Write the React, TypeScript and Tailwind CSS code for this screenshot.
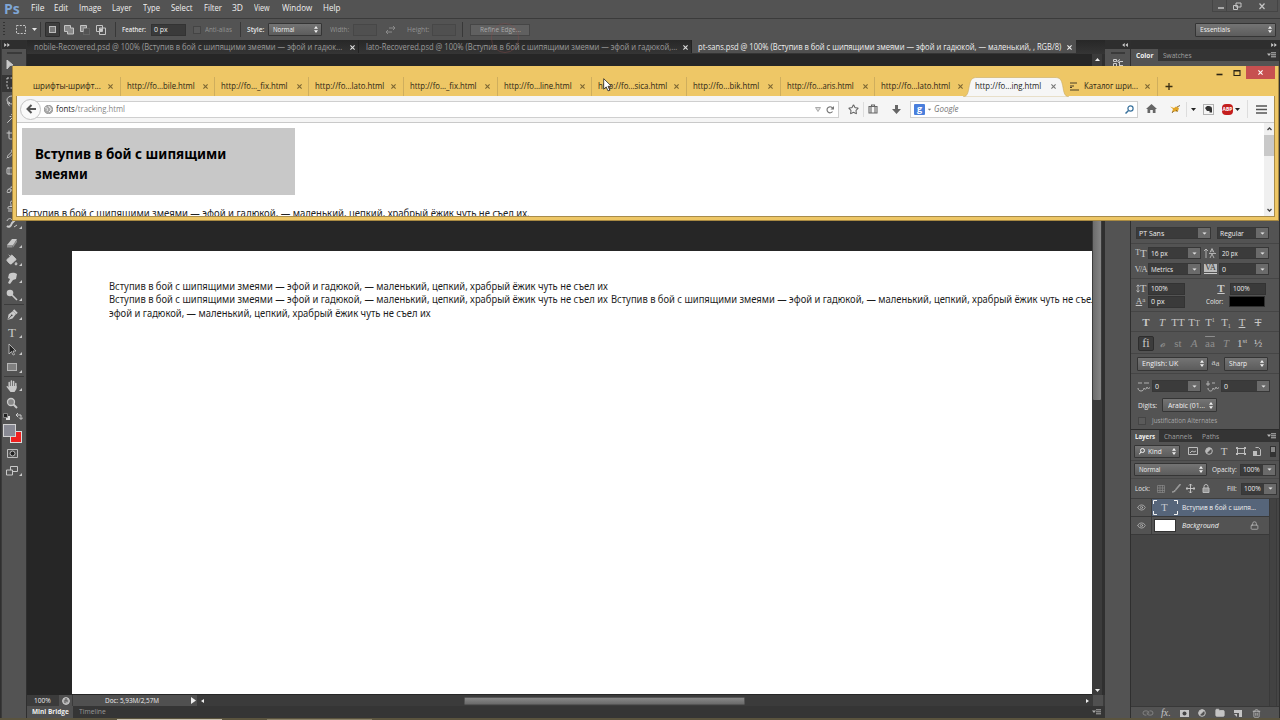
import { useLayoutEffect, useRef, useState, type ReactNode } from 'react';
import { Eraser, PaintBucket, Hand, PenTool, Lasso, Crop, Pipette, Brush, Stamp, Bandage, Star, Eye, Lock, Link, Folder, Trash2, Wand } from 'lucide-react';

function Fit({ w, className = '', children }: { w: number; className?: string; children: string }) {
  const ref = useRef<HTMLSpanElement>(null);
  const [scale, setScale] = useState(1);
  useLayoutEffect(() => {
    if (ref.current) setScale(w / ref.current.offsetWidth);
  }, [w, children]);
  return (
    <span className={`block shrink-0 overflow-visible whitespace-pre ${className}`} style={{ width: w }}>
      <span ref={ref} className="inline-block origin-left" style={{ transform: `scaleX(${scale})` }}>{children}</span>
    </span>
  );
}

function Svg({ w, h, className = '', children }: { w: number; h: number; className?: string; children: ReactNode }) {
  return (
    <svg width={w} height={h} viewBox={`0 0 ${w} ${h}`} className={`block shrink-0 ${className}`} fill="none" stroke="currentColor">
      {children}
    </svg>
  );
}

const Down = ({ className = '' }: { className?: string }) => (
  <Svg w={5} h={3} className={className}><path d="M0 0h5L2.5 3z" fill="currentColor" stroke="none" /></Svg>
);
const UpDown = ({ className = '' }: { className?: string }) => (
  <Svg w={4} h={7} className={className}><path d="M0 2.7 2 0l2 2.7zM0 4.3h4L2 7z" fill="currentColor" stroke="none" /></Svg>
);
const Cross = ({ className = '' }: { className?: string }) => (
  <Svg w={5} h={5} className={className}><path d="m.4.4 4.2 4.2M4.6.4.4 4.6" strokeWidth="1.1" /></Svg>
);
const Chevrons = ({ left = false, className = '' }: { left?: boolean; className?: string }) => (
  <Svg w={6} h={4} className={className}>
    <path d={left ? 'M2.7 0v4L.2 2zM5.9 0v4L3.4 2z' : 'M.2 0v4l2.5-2zM3.3 0v4l2.5-2z'} fill="currentColor" stroke="none" />
  </Svg>
);
const PanelMenu = ({ className = '' }: { className?: string }) => (
  <Svg w={9} h={6} className={className}><path d="M0 1.5h4L2 4z" fill="currentColor" stroke="none" /><path d="M4 .8h5M4 2.8h5M4 4.8h5" /></Svg>
);

const Divider = ({ className = '' }: { className?: string }) => (
  <div className={`h-[15px] w-px shrink-0 bg-[#383838] ${className}`} />
);

const selectCls = 'flex shrink-0 items-center rounded-[1px] border border-[#353535] bg-linear-to-b from-[#747474] to-[#5c5c5c] text-[#f0f0f0]';
const fieldCls = 'flex shrink-0 items-center border border-[#333] bg-[#3a3a3a] text-[#ededed]';

const menus: [string, number, number][] = [
  ['File', 31, 13], ['Edit', 54, 14], ['Image', 79, 22], ['Layer', 112, 20], ['Type', 142.5, 17], ['Select', 171, 21],
  ['Filter', 204, 18], ['3D', 232, 11], ['View', 254, 16], ['Window', 282, 30], ['Help', 323, 17],
];

function MenuBar() {
  return (
    <div className="flex h-[18px] items-start justify-between bg-[#535353]">
      <div className="flex h-[17px] items-center pl-[4px]">
        <Fit w={16} className="mr-[11px] text-[14px] font-bold text-[#7fa6d6]">Ps</Fit>
        {menus.map(([name, x, w], i) => (
          <div key={name} style={{ width: (i < menus.length - 1 ? menus[i + 1][1] : 345) - x }}>
            <Fit w={w} className="text-[8.5px] text-[#f0f0f0]">{name}</Fit>
          </div>
        ))}
      </div>
      <div className="mr-[2px] flex h-[12px] items-center border border-t-0 border-[#454545] text-[#c4c4c4]">
        <Svg w={13} h={10}><path d="M5 7h6" strokeWidth="1.5" /></Svg>
        <div className="h-full w-px bg-[#454545]" />
        <Svg w={20} h={10}><path d="M9 2h5v4h-5zM6.500 4.500h4v4h-4z" /></Svg>
        <Svg w={30} h={10}><path d="m12.500 2.500 5 5.500M17.500 2.500l-5 5.500" strokeWidth="1.2" /></Svg>
      </div>
    </div>
  );
}

function OptionsBar() {
  return (
    <div className="flex h-[22px] items-center justify-between border-t border-[#3b3b3b] bg-[#535353] text-[7px] text-[#e6e6e6]">
      <div className="flex items-center pl-[3px]">
        <Svg w={3} h={15}><path d="M1 0v15" stroke="#333" strokeWidth="2" strokeDasharray="1 2" /></Svg>
        <Svg w={10} h={9} className="ml-[10px] text-[#c5c5c5]"><path d="M.5.5h9v8h-9z" strokeDasharray="2 1.3" /></Svg>
        <Down className="ml-[6px]" />
        <Divider className="ml-[3px]" />
        <div className="ml-[4px] flex h-[15px] w-[15px] items-center justify-center rounded-[1px] border border-[#2e2e2e] bg-[#3d3d3d]">
          <div className="h-[7px] w-[7px] border border-[#bbb] bg-[#777]" />
        </div>
        <Svg w={10} h={10} className="ml-[4px] text-[#c5c5c5]"><path d="M.5.500h6v2.500h3v6h-6v-2.500h-3z" fill="#888" /></Svg>
        <Svg w={10} h={10} className="ml-[6px] text-[#c5c5c5]"><path d="M.5.500h6v2.500h-3v3.500h-3z" fill="#888" /><path d="M3.500 3.500h6v6h-6z" stroke="#777" strokeDasharray="1 1" /></Svg>
        <Svg w={10} h={10} className="ml-[6px] text-[#c5c5c5]"><path d="M.5.500h6v6h-6zM3.500 3h6v6.500h-6z" /><path d="M4 4h2v2h-2z" fill="#ddd" /></Svg>
        <Divider className="ml-[9px]" />
        <Fit w={24} className="ml-[6px] font-semibold">Feather:</Fit>
        <div className={`${fieldCls} ml-[5px] h-[12px] w-[35px] pl-[2px]`}><Fit w={14}>0 px</Fit></div>
        <div className="ml-[7px] h-[8px] w-[8px] border border-[#444] bg-[#595959]" />
        <Fit w={27} className="ml-[4px] text-[#929292]">Anti-alias</Fit>
        <Divider className="ml-[8px]" />
        <Fit w={17} className="ml-[6px] font-semibold">Style:</Fit>
        <div className={`${selectCls} ml-[4px] h-[13px] w-[54px] justify-between pr-[3px] pl-[4px]`}><Fit w={21}>Normal</Fit><UpDown /></div>
        <Fit w={19} className="ml-[8px] text-[#929292]">Width:</Fit>
        <div className="ml-[4px] h-[12px] w-[24px] border border-[#474747] bg-[#505050]" />
        <Svg w={9} h={8} className="ml-[9px] text-[#8b8b8b]"><path d="M3 2h6M7 0l2 2-2 2M6 6H0M2 4 0 6l2 2" /></Svg>
        <Fit w={22} className="ml-[12px] text-[#929292]">Height:</Fit>
        <div className="ml-[3px] h-[12px] w-[24px] border border-[#474747] bg-[#505050]" />
        <Divider className="ml-[6px]" />
        <div className="ml-[7px] flex h-[12px] w-[60px] items-center justify-center border border-[#464646] bg-[#606060] text-[#a9a9a9]"><Fit w={41}>Refine Edge...</Fit></div>
      </div>
      <div className={`${selectCls} mr-[4px] h-[14px] w-[81px] justify-between pr-[3px] pl-[4px] text-[7px]`}><Fit w={30}>Essentials</Fit><UpDown /></div>
    </div>
  );
}

function Tool({ children, on = false, corner = true }: { children: ReactNode; on?: boolean; corner?: boolean }) {
  return (
    <div className={`flex h-[17.5px] items-center justify-center pr-px text-[#c9c9c9] ${on ? 'bg-[#363636]' : ''}`}>
      <div className="flex w-[14px] justify-center">{children}</div>
      <Svg w={3} h={17}>{corner && <path d="M3 11v3H0z" fill="currentColor" stroke="none" />}</Svg>
    </div>
  );
}

function Toolbar() {
  return (
    <div className="flex w-[25px] shrink-0 flex-col border-l border-[#3a3a3a] bg-[#535353]">
      <div className="flex h-[9px] items-center bg-[#2e2e2e] pl-[2px] text-[#ccc]"><Chevrons /></div>
      <div className="flex h-[8px] items-center justify-center"><div className="h-[2px] w-[15px] bg-[#3a3a3a]" /></div>
      <Tool><Svg w={12} h={12}><path d="m1 0 6 5-3 .5L1 9z" fill="currentColor" /></Svg></Tool>
      <Tool on><Svg w={12} h={12}><path d="M1 1h10v10H1z" strokeDasharray="2 1.500" /></Svg></Tool>
      <Tool><Lasso size={12} /></Tool>
      <Tool><Wand size={12} /></Tool>
      <Tool><Crop size={12} /></Tool>
      <Tool><Pipette size={12} /></Tool>
      <Tool><Bandage size={12} /></Tool>
      <Tool><Brush size={12} /></Tool>
      <Tool><Stamp size={12} /></Tool>
      <Tool><Svg w={12} h={12}><path d="M1 9c2 2 4 0 5-3l5-5" strokeWidth="2" /><path d="M1 4c1-3 4-3 5-1M8 10l3-2" /></Svg></Tool>
      <div className="h-[2px]" />
      <Tool><Svg w={12} h={10}><path d="m1 7 5-6h5L7 7.500z" fill="#c9c9c9" stroke="none" /><path d="M1 7h5.500v2.500H1zM7 9.500 11 4V1.500L7 7z" fill="#8f8f8f" stroke="none" /></Svg></Tool>
      <Tool><PaintBucket size={12} fill="#c9c9c9" strokeWidth={1.5} /></Tool>
      <Tool><Svg w={12} h={12}><path d="M3 2c3-2 6-1 8 0l-1 5-3 1-3 4-2-1 2-4-2-1z" fill="currentColor" stroke="none" /></Svg></Tool>
      <Tool><Svg w={12} h={12}><circle cx="4" cy="4" r="3.300" fill="currentColor" stroke="none" /><path d="m6 6 5 5" strokeWidth="1.600" /></Svg></Tool>
      <div className="mx-[2px] mb-[1px] h-px shrink-0 bg-[#3c3c3c]" />
      <Tool><Svg w={12} h={13}><path d="m1.500 12 1-5.500L7 3l3 3-3.500 4.500z" fill="#c9c9c9" stroke="none" /><path d="m7.500 2 3.500 3.500" strokeWidth="2" /><path d="m2 11.500 3-3.500" stroke="#444" strokeWidth=".8" /><circle cx="5.700" cy="7.300" r=".9" fill="#444" stroke="none" /></Svg></Tool>
      <Tool><span className="font-['Liberation_Serif',serif] text-[13px] leading-none">T</span></Tool>
      <Tool><Svg w={10} h={13}><path d="m2 1 7 7H6l1.500 3.500-1.500.500L4.500 8.500 2 11z" fill="#252525" strokeWidth=".8" /></Svg></Tool>
      <Tool><div className="h-[8px] w-[10px] border border-[#b5b5b5] bg-[#808080]" /></Tool>
      <div className="mx-[2px] h-px shrink-0 bg-[#3c3c3c]" />
      <Tool><Svg w={12} h={12}><path d="M3.200 8V2.500M5.400 7V1M7.600 7V1.500M9.800 7.500V3.500" strokeWidth="1.500" strokeLinecap="round" /><path d="M.3 6.500 1.500 6 3 7.500V6h7.500v3L8.500 12H4.500z" fill="currentColor" stroke="none" /></Svg></Tool>
      <Tool corner={false}><Svg w={12} h={12}><circle cx="5" cy="5" r="3.500" fill="#888" strokeWidth="1.300" /><path d="m7.500 7.500 3.500 3.500" strokeWidth="2" /></Svg></Tool>
      <div className="flex h-[9px] items-center gap-[6px] pl-[1px] text-[#ccc]">
        <Svg w={7} h={7}><path d="M3 3h4v4H3z" fill="#ddd" stroke="none" /><path d="M.5.500h4v4h-4z" fill="#222" stroke="#888" /></Svg>
        <Svg w={7} h={7}><path d="M0 2h5v4M2 0 0 2l2 2M3 4.500l2 2 2-2" /></Svg>
      </div>
      <div className="grid h-[23px] grid-cols-[7px_6px_6px] grid-rows-[7px_6px_6px] pt-[3px] pl-[1px]">
        <div className="z-10 col-start-1 col-end-3 row-start-1 row-end-3 border border-[#d2d2d2] bg-[#888993]" />
        <div className="col-start-2 col-end-4 row-start-2 row-end-4 border border-[#ddd] bg-[#f0201f]" />
      </div>
      <div className="flex h-[18px] items-center justify-center pt-[1px] pr-[4px]"><Svg w={11} h={9} className="text-[#bdbdbd]"><path d="M.5.500h10v8H.5z" /><circle cx="5.500" cy="4.500" r="2.500" fill="#222" /></Svg></div>
      <Tool><Svg w={12} h={10}><path d="M4.500.500h7v5h-7z" /><path d="M.5 4h6v5h-6z" fill="#555" /></Svg></Tool>
    </div>
  );
}

const phrase = 'Вступив в бой с шипящими змеями — эфой и гадюкой, — маленький, цепкий, храбрый ёжик чуть не съел их';

function Document() {
  return (
    <div className="ml-[1px] flex w-[1078px] shrink-0 flex-col bg-[#2e2e2e]">
      <div className="flex h-[14px] shrink-0 items-center bg-linear-to-b from-[#272727] to-[#353535] pb-px text-[8.2px] text-[#9a9a9a]">
        <div className="flex h-full w-[332px] items-center border-r border-[#222] pt-[2px] pl-[7px]"><Fit w={308}>nobile-Recovered.psd @ 100% (Вступив в бой с шипящими змеями — эфой и гадюк...</Fit><Cross className="ml-[8px] text-[#ddd]" /></div>
        <div className="flex h-full w-[333px] items-center border-r border-[#222] pt-[2px] pl-[7px]"><Fit w={311}>lato-Recovered.psd @ 100% (Вступив в бой с шипящими змеями — эфой и гадюкой,...</Fit><Cross className="ml-[6px] text-[#ddd]" /></div>
        <div className="flex h-full w-[384px] items-center bg-[#505050] pt-[2px] pl-[6px] text-[#efefef]"><Fit w={363}>pt-sans.psd @ 100% (Вступив в бой с шипящими змеями — эфой и гадюкой, — маленький, , RGB/8)</Fit><Cross className="ml-[6px]" /></div>
      </div>
      <div className="flex h-[641px] shrink-0">
        <div className="h-full w-[1065px] overflow-hidden bg-[#262626] pt-[197px] pl-[45px]">
          <div className="h-[443px] overflow-hidden bg-white pt-[29px] pl-[37px] font-['Noto_Sans',sans-serif] text-[10.5px] leading-[13.3px] text-[#1c1c1c]">
            <Fit w={499}>{phrase}</Fit>
            <div className="flex gap-[3px]"><Fit w={499}>{phrase}</Fit><Fit w={499}>{phrase}</Fit></div>
            <Fit w={322}>эфой и гадюкой, — маленький, цепкий, храбрый ёжик чуть не съел их</Fit>
          </div>
        </div>
        <div className="flex w-[10px] flex-col items-center justify-between bg-[#3b3b3b] pt-[4px] pb-[3px]">
          <Down className="rotate-180 text-[#eee]" />
          <div className="mb-[285px] h-[334px] w-[8px] rounded-b-[1px] bg-linear-to-r from-[#6c6c6c] to-[#858585]" />
          <Down className="text-[#eee]" />
        </div>
        <div className="w-[3px] bg-[#2f2f2f]" />
      </div>
      <div className="flex h-[11px] shrink-0 items-center bg-[#3b3b3b] text-[7px] text-[#eee]">
        <Fit w={17} className="ml-[7px]">100%</Fit>
        <div className="ml-[8px] flex h-full w-[13px] items-center justify-center bg-[#505050]"><Svg w={8} h={8} className="text-[#ccc]"><circle cx="4" cy="4" r="3.400" fill="#aaa" /><path d="M4 1v3h2M3 3v3" stroke="#555" /></Svg></div>
        <div className="ml-px flex h-full w-[124px] items-center justify-between bg-[#505050] pl-[32px]"><Fit w={54}>Doc: 5,93M/2,57M</Fit><Svg w={5} h={7} className="mr-[1px]"><path d="M0 0v7l5-3.500z" fill="currentColor" stroke="none" /></Svg></div>
        <Svg w={3} h={4} className="ml-[4px]"><path d="M3 0v4L0 2z" fill="currentColor" stroke="none" /></Svg>
        <div className="ml-[260px] h-[8px] w-[281px] rounded-[1px] border border-[#555] bg-linear-to-b from-[#888] to-[#6a6a6a]" />
        <Svg w={3} h={4} className="ml-[341px]"><path d="M0 0v4l3-2z" fill="currentColor" stroke="none" /></Svg>
        <div className="ml-[4px] h-full w-[10px] bg-[#505050]" />
      </div>
      <div className="flex h-[12px] shrink-0 items-center justify-between bg-[#353535] text-[7.500px] font-bold">
        <div className="flex h-full items-center">
          <div className="flex h-full w-[46px] items-center bg-[#505050] pl-[5px] text-[#eee]"><Fit w={37}>Mini Bridge</Fit></div>
          <Fit w={27} className="ml-[6px] font-normal text-[#999]">Timeline</Fit>
        </div>
        <PanelMenu className="mr-[4px] text-[#aaa]" />
      </div>
    </div>
  );
}

const DropButton = () => (
  <div className="flex h-full w-[12px] shrink-0 items-center justify-center bg-[#6a6a6a] text-[#ddd]"><Down className="scale-90" /></div>
);

function Combo({ w, text, tw, className = '' }: { w: number; text: string; tw: number; className?: string }) {
  return (
    <div className={`flex h-[12px] shrink-0 items-center justify-between border border-[#373737] bg-[#3b3b3b] pl-[2px] text-[#ededed] ${className}`} style={{ width: w }}>
      <Fit w={tw}>{text}</Fit>
      <DropButton />
    </div>
  );
}

function Glyph({ className = '', children }: { className?: string; children: ReactNode }) {
  return <span className={`flex w-[16px] shrink-0 items-center justify-center font-['Liberation_Serif',serif] text-[11px] leading-none text-[#c8c8c8] ${className}`}>{children}</span>;
}

function CharacterPanel() {
  return (
    <div className="flex h-[368px] shrink-0 flex-col justify-end bg-[#535353] text-[7px] text-[#e8e8e8]">
      <div className="flex h-[21px] items-center gap-[6px] border-b border-[#454545] pl-[5px]">
        <Combo w={75} text="PT Sans" tw={25} /><Combo w={52} text="Regular" tw={24} />
      </div>
      <div className="flex h-[35px] flex-col justify-center gap-[4px] border-b border-[#454545]">
        <div className="flex h-[12px] items-center">
          <Glyph className="w-[17px]! pl-[3px]"><span className="text-[8px]">T</span>T</Glyph><Combo w={53} text="16 px" tw={17} />
          <Svg w={12} h={11} className="ml-[3px] text-[#c8c8c8]"><path d="M2 1v9M0 3l2-2 2 2M6 4.500 8 .500l2 4M7 3h2M5 5.500h7M6 10l2-4 2 4" strokeWidth=".8" /></Svg>
          <Combo w={50} text="20 px" tw={16} className="ml-[3px]" />
        </div>
        <div className="flex h-[12px] items-center">
          <Glyph className="w-[17px]! pl-[2px] text-[9px]! tracking-[-1.2px]">V/A</Glyph><Combo w={53} text="Metrics" tw={22} />
          <div className="ml-[3px] flex h-[11px] w-[13px] flex-col items-center"><span className="w-full bg-[#bbb] text-center font-['Liberation_Serif',serif] text-[8px] leading-[8px] text-[#333]">VA</span><div className="mt-px h-px w-full bg-[#ccc]" /></div>
          <Combo w={50} text="0" tw={4} className="ml-[2px]" />
        </div>
      </div>
      <div className="flex h-[33px] flex-col justify-center border-b border-[#454545]">
        <div className="flex h-[13px] items-center">
          <Glyph className="w-[17px]! pl-[3px]"><Svg w={4} h={9}><path d="M2 1v7M.5 2.500 2 .800l1.500 1.700M.5 6.500 2 8.200l1.500-1.700" strokeWidth=".8" /></Svg>T</Glyph><div className={`${fieldCls} h-[12px] w-[37px] pl-[2px]`}><Fit w={17}>100%</Fit></div>
          <Glyph className="ml-[28px] font-bold underline">T</Glyph><div className={`${fieldCls} ml-[1px] h-[12px] w-[36px] pl-[2px]`}><Fit w={17}>100%</Fit></div>
        </div>
        <div className="flex h-[13px] items-center">
          <Glyph className="w-[17px]! pl-[2px] text-[9px]!"><span className="underline">A</span><span className="mb-[3px] text-[7px]">a</span></Glyph><div className={`${fieldCls} h-[12px] w-[37px] pl-[2px]`}><Fit w={14}>0 px</Fit></div>
          <Fit w={17} className="ml-[21px]">Color:</Fit><div className="ml-[6px] h-[11px] w-[36px] border border-[#2f2f2f] bg-black" />
        </div>
      </div>
      <div className="flex h-[20px] items-center border-b border-[#454545] pt-[2px] pl-[7px]">
        <Glyph className="font-bold">T</Glyph><Glyph className="italic">T</Glyph><Glyph>TT</Glyph><Glyph>T<span className="mt-[2px] text-[8px]">T</span></Glyph>
        <Glyph>T<span className="mb-[5px] text-[6px]">1</span></Glyph><Glyph>T<span className="mt-[6px] text-[6px]">1</span></Glyph><Glyph className="underline">T</Glyph><Glyph className="line-through">T</Glyph>
      </div>
      <div className="flex h-[22px] items-center border-b border-[#454545] pt-[1px] pl-[7px]">
        <Glyph className="h-[15px] rounded-[2px] border border-[#2d2d2d] bg-[#3c3c3c] text-[12px]!">fi</Glyph><Glyph className="italic opacity-50">&#x1D4F8;</Glyph><Glyph className="opacity-50">st</Glyph><Glyph className="italic opacity-50">A</Glyph><Glyph className="overline opacity-50">aa</Glyph><Glyph className="italic opacity-50">T</Glyph><Glyph>1<span className="mb-[4px] text-[7px]">st</span></Glyph><Glyph>½</Glyph>
      </div>
      <div className="flex h-[20px] items-center border-b border-[#454545] pl-[6px]">
        <div className={`${selectCls} h-[14px] w-[71px] justify-between pr-[3px] pl-[4px]`}><Fit w={36}>English: UK</Fit><UpDown /></div>
        <Glyph className="mr-px w-[15px]! text-[9px]!"><span className="mb-[3px]">a</span><span>a</span></Glyph>
        <div className={`${selectCls} h-[14px] w-[44px] justify-between pr-[3px] pl-[4px]`}><Fit w={18}>Sharp</Fit><UpDown /></div>
      </div>
      <div className="flex h-[24px] items-center pl-[6px]">
        <Svg w={13} h={11} className="text-[#bbb]"><path d="M1 2h4M7 2h5M1 7c0 4 6 4 6 0M7 7c1 2 3 1 3-1 0 2 3 2 3 0" strokeWidth=".9" /></Svg>
        <Combo w={49} text="0" tw={4} className="ml-[2px]" />
        <Svg w={13} h={11} className="ml-[5px] text-[#bbb]"><path d="M2 0v5M0 3h4M6 2h3M2 7c0 4 5 4 5 0M7 7c1 2 3 1 3-1 0 2 3 2 3 0" strokeWidth=".9" /></Svg>
        <Combo w={49} text="0" tw={4} className="ml-[2px]" />
      </div>
      <div className="flex h-[14px] items-center pl-[7px]">
        <Fit w={19}>Digits:</Fit>
        <div className={`${selectCls} ml-[5px] h-[14px] w-[55px] justify-between pr-[3px] pl-[5px]`}><Fit w={37}>Arabic (01...</Fit><UpDown /></div>
      </div>
      <div className="flex h-[17px] items-center pl-[7px]">
        <div className="h-[8px] w-[8px] border border-[#454545] bg-[#5a5a5a]" />
        <Fit w={65} className="ml-[6px] text-[#a8a8a8]">Justification Alternates</Fit>
      </div>
    </div>
  );
}

function LayersPanel() {
  return (
    <>
      <div className="flex h-[13px] shrink-0 items-center border-t border-[#2b2b2b] bg-[#343434] text-[7px] text-[#a0a0a0]">
        <div className="flex h-full w-[28px] items-center bg-[#535353] pl-[4px] font-bold text-[#f0f0f0]"><Fit w={20}>Layers</Fit></div>
        <Fit w={28} className="ml-[5px]">Channels</Fit><Fit w={17} className="ml-[10px]">Paths</Fit><PanelMenu className="ml-[48px] text-[#bbb]" />
      </div>
      <div className="shrink-0 bg-[#535353] text-[7px] text-[#e8e8e8]">
        <div className="flex h-[19px] items-center border-b border-[#454545] pl-[3px] text-[#bdbdbd]">
          <div className={`${selectCls} h-[13px] w-[46px] justify-between pr-[3px] pl-[4px]`}><Svg w={6} h={7}><circle cx="3.500" cy="2.500" r="2" /><path d="M2 4 0 6.500" /></Svg><Fit w={14} className="mr-[7px]">Kind</Fit><UpDown /></div>
          <Svg w={10} h={8} className="ml-[8px]"><path d="M.5.500h9v7h-9zM2 6l2-2 2 1 2-1" /></Svg>
          <Svg w={8} h={8} className="ml-[7px]"><circle cx="4" cy="4" r="3.300" /><path d="M1.500 6 6 1.500A3.300 3.300 0 0 0 1.500 6" fill="currentColor" /></Svg>
          <Glyph className="ml-[3px]">T</Glyph>
          <Svg w={10} h={8} className="ml-[4px]"><path d="M1.500 1.500h7v5h-7z" /><path d="M0 0h2v2H0zM8 0h2v2H8zM0 6h2v2H0zM8 6h2v2H8z" fill="currentColor" stroke="none" /></Svg>
          <Svg w={8} h={9} className="ml-[7px]"><path d="M2.500.500h3l2 2v6H3" /><path d="M0 4h4v5H0z" fill="currentColor" stroke="none" /></Svg>
          <div className="ml-[9px] h-[11px] w-[6px] border border-[#333] bg-[#333]"><div className="h-[5px] bg-[#888]" /></div>
        </div>
        <div className="flex h-[18px] items-center border-b border-[#484848] pl-[3px]">
          <div className={`${selectCls} h-[13px] w-[73px] justify-between pr-[3px] pl-[4px]`}><Fit w={21}>Normal</Fit><UpDown /></div>
          <Fit w={25} className="ml-[5px]">Opacity:</Fit><Combo w={36} text="100%" tw={17} className="ml-[3px]" />
        </div>
        <div className="flex h-[20px] items-center border-b border-[#3e3e3e] pl-[4px]">
          <Fit w={15}>Lock:</Fit>
          <Svg w={8} h={8} className="ml-[7px] text-[#888]"><path d="M.5.500h7v7h-7zM3 0v8M5.500 0v8M0 3h8M0 5.500h8" strokeWidth=".7" /></Svg>
          <Svg w={10} h={9} className="ml-[6px] text-[#999]"><path d="M9.500 0 4.500 6M1 8c2 0 3-1 3-2" strokeWidth="1.600" /></Svg>
          <Svg w={9} h={9} className="ml-[5px] text-[#ccc]"><path d="M4.500 0v9M0 4.500h9M3 1.500 4.500 0 6 1.500M3 7.500 4.500 9 6 7.500M1.500 3 0 4.500 1.500 6M7.500 3 9 4.500 7.500 6" strokeWidth=".9" /></Svg>
          <Svg w={8} h={9} className="ml-[7px] text-[#bbb]"><path d="M2 4V2.500a2 2 0 0 1 4 0V4" /><path d="M1 4h6v4.500H1z" fill="#999" /></Svg>
          <Fit w={10} className="ml-[17px]">Fill:</Fit><Combo w={36} text="100%" tw={17} className="ml-[4px]" />
        </div>
      </div>
      <div className="flex h-[207px] shrink-0 bg-[#454545] text-[7.500px] text-[#f0f0f0]">
        <div className="flex w-[138px] flex-col">
          <div className="flex h-[18px] items-center border-b border-[#393939] bg-[#535353]">
            <Eye size={9} className="ml-[6px] text-[#b8b8b8]" />
            <div className="ml-[5px] flex h-full w-[118px] items-center border-l border-[#3d3d3d] bg-[#56657a]">
              <Svg w={25} h={15} className="ml-px"><path d="M4 .500H.5V4M21 .500h3.500V4M4 14.500H.5V11M21 14.500h3.500V11" /></Svg>
              <span className="-ml-[17px] w-[9px] font-['Liberation_Serif',serif] text-[11px] leading-none text-[#c5c9d0]">T</span>
              <Fit w={74} className="ml-[12px]">Вступив в бой с шипя...</Fit>
            </div>
          </div>
          <div className="flex h-[18px] items-center border-b border-[#393939] bg-[#535353]">
            <Eye size={9} className="ml-[6px] text-[#b8b8b8]" />
            <div className="ml-[5px] flex h-full items-center border-l border-[#3d3d3d]">
              <div className="ml-[2px] h-[13px] w-[22px] border border-[#333] bg-white" />
              <Fit w={37} className="ml-[6px] italic">Background</Fit>
              <Lock size={9} className="ml-[31px] text-[#bbb]" />
            </div>
          </div>
        </div>
        <div className="w-[8px] border-x border-[#3a3a3a] bg-[#424242]" />
      </div>
      <div className="flex h-[13px] shrink-0 items-center border-t border-[#383838] bg-[#535353] pl-[12px] text-[#c4c4c4]">
        <Link size={10} className="rotate-45 text-[#888]" />
        <span className="ml-[8px] w-[11px] font-['Liberation_Serif',serif] text-[10px] leading-none italic">fx.</span>
        <Svg w={9} h={7} className="ml-[8px]"><path d="M0 0h9v7H0z" fill="currentColor" stroke="none" /><circle cx="4.500" cy="3.500" r="2" fill="#444" stroke="none" /></Svg>
        <Svg w={9} h={8} className="ml-[9px]"><circle cx="4" cy="4" r="3.300" /><path d="M1.500 6 6 1.500A3.300 3.300 0 0 0 1.500 6" fill="currentColor" /></Svg>
        <Folder size={10} fill="currentColor" className="ml-[8px]" />
        <Svg w={8} h={7} className="ml-[9px]"><path d="M0 0h8v7H5V3H0z" fill="currentColor" stroke="none" /><path d="M0 4h3v3z" fill="currentColor" stroke="none" /></Svg>
        <Trash2 size={9} className="ml-[10px]" />
      </div>
    </>
  );
}

function RightDock() {
  return (
    <>
      <div className="flex w-[25px] shrink-0 flex-col bg-[#535353]">
        <div className="flex h-[9px] shrink-0 items-center justify-end bg-[#2e2e2e] pr-[2px] text-[#ccc]"><Chevrons left /></div>
        <div className="mx-auto mt-[3px] h-[2px] w-[14px] bg-[#3a3a3a]" />
        <Svg w={12} h={11} className="mx-auto mt-[4px] text-[#ccc]"><path d="M1.500 1.500h3v2h-3zM1.500 5.500h3v3h-3zM7.500 8V3.500H11M7 5l-1.500-2L8 1.500M7 7.500h4" /></Svg>
      </div>
      <div className="ml-[1px] flex w-[148px] shrink-0 flex-col">
        <div className="flex h-[9px] shrink-0 items-center justify-end bg-[#2e2e2e] pr-[2px] text-[#ccc]"><Chevrons /></div>
        <div className="flex h-[12px] shrink-0 items-center bg-[#343434] text-[7px] text-[#a0a0a0]">
          <div className="flex h-full w-[27px] items-center bg-[#535353] pl-[5px] font-bold text-[#f0f0f0]"><Fit w={17}>Color</Fit></div>
          <Fit w={29} className="ml-[5px]">Swatches</Fit><PanelMenu className="ml-[75px] text-[#bbb]" />
        </div>
        <CharacterPanel />
        <LayersPanel />
      </div>
    </>
  );
}

const browserTabs: [string, number][] = [
  ['шрифты-шрифт...', 68], ['http://fo...bile.html', 68], ['http://fo..._fix.html', 67], ['http://fo...lato.html', 69], ['http://fo..._fix.html', 67],
  ['http://fo...line.html', 68], ['http://fo...sica.html', 69], ['http://fo...bik.html', 66], ['http://fo...aris.html', 67], ['http://fo...lato.html', 69],
];

function BrowserTabs() {
  return (
    <div className="flex h-[30px] justify-between">
      <div className="flex items-end pl-[13.500px] text-[8.300px] text-[#2b2414]">
        {browserTabs.map(([name, w], i) => (
          <div key={i} className={`flex h-[19px] w-[94.3px] items-center justify-between pr-[6.500px] pl-[6px] ${i < 9 ? 'border-r border-[#cfae5d]' : ''}`}>
            <Fit w={w}>{name}</Fit><Cross className="text-[#7b6633]" />
          </div>
        ))}
        <div className="relative flex h-[19px] w-[94px] items-center justify-between pr-[7px] pl-[6px] text-[#222]">
          <Svg w={106} h={20} className="absolute top-0 -left-[6px]"><path d="M0 20C6 19 5 13 7 6 8 2 10 .500 14 .500h78c4 0 6 1.500 7 5.500 2 7 1 13 7 14z" fill="#f6f6f6" stroke="#c9ab61" strokeWidth=".6" /></Svg>
          <Fit w={66} className="relative">http://fo...ing.html</Fit><Cross className="relative text-[#777]" />
        </div>
        <div className="flex h-[19px] w-[95px] items-center border-r border-[#cfae5d] pl-[7px]">
          <Svg w={9} h={9}><path d="M0 1h7M0 4h4M0 8h9M0 5.500h2" stroke="#4b4027" strokeWidth="1.200" /></Svg>
          <Fit w={54} className="ml-[5px]">Каталог шри...</Fit><Cross className="ml-[7px] text-[#7b6633]" />
        </div>
        <Svg w={8} h={19} className="ml-[7px]"><path d="M4 6v7M.5 9.500h7" stroke="#3a2f13" strokeWidth="1.300" /></Svg>
      </div>
      <div className="absolute top-0 right-[3px] flex h-[13px] text-[#2b2414]">
        <Svg w={17} h={13}><path d="M5.500 8.500h6" strokeWidth="1.600" /></Svg>
        <Svg w={18} h={13}><path d="M6 4.500h6v5h-6zM6 5h6" strokeWidth="1.100" /></Svg>
        <div className="flex w-[29px] items-center justify-center bg-[#c75050] text-white"><Cross /></div>
      </div>
    </div>
  );
}

function NavBar() {
  return (
    <div className="flex h-[27px] shrink-0 items-center border-b border-[#c9c9c9] bg-[#f5f5f5] text-[8.300px] text-[#777]">
      <div className="z-10 ml-[3px] flex h-[21px] w-[21px] items-center justify-center rounded-full border border-[#c4c4c4] bg-[#fafafa]">
        <Svg w={10} h={10} className="text-[#555]"><path d="M10 5H2M5.500 1 1.500 5l4 4" strokeWidth="2" /></Svg>
      </div>
      <div className="-ml-[7px] flex h-[17px] w-[805px] items-center border border-[#cfcfcf] bg-white pl-[9px]">
        <Svg w={9} h={9} className="text-[#999]"><circle cx="4.500" cy="4.500" r="4.100" fill="#aaa" /><path d="M1 3c2-1 3 1 2 3M5 1c-1 2 3 1 2 4l-2 2" stroke="#f4f4f4" /></Svg>
        <Fit w={19} className="ml-[3px] text-[#222]">fonts</Fit><Fit w={50} className="text-[#888]">/tracking.html</Fit>
        <Svg w={6} h={5} className="ml-auto text-[#aaa]"><path d="M.5.500h5L3 4.500z" fill="#ddd" /></Svg>
        <Svg w={8} h={9} className="mr-[4px] ml-[5px] text-[#777]"><path d="M6.500 6.500A3 3 0 1 1 6 2.500L7 4" strokeWidth="1.200" /><path d="M8 1v3.500H4.500z" fill="currentColor" stroke="none" /></Svg>
      </div>
      <Star size={11} strokeWidth={2.3} className="ml-[9px] text-[#666]" />
      <div className="ml-[4px] h-[15px] w-px bg-[#ddd]" />
      <Svg w={10} h={10} className="ml-[4px] text-[#666]"><path d="M1 2.500h8v6.500H1zM3.500 2.500V1h3v1.500M3 3v6M7 3v6" strokeWidth="1.100" /></Svg>
      <Svg w={9} h={9} className="ml-[14px] text-[#666]"><path d="M3 0h3v4h3L4.500 9 0 4h3z" fill="currentColor" stroke="none" /></Svg>
      <div className="ml-[9px] flex h-[17px] w-[228px] shrink-0 items-center border border-[#cfcfcf] bg-white pl-[3px]">
        <div className="flex h-[11px] w-[11px] items-center justify-center rounded-[1px] bg-[#4a7fdc] font-bold text-white"><span className="pb-[2px] text-[9px] leading-none">g</span></div>
        <Down className="ml-[2px] scale-75" /><Fit w={25} className="ml-[2px] italic">Google</Fit>
        <Svg w={9} h={9} className="mr-[3px] ml-auto text-[#38719c]"><circle cx="5.500" cy="3.500" r="2.600" strokeWidth="1.200" /><path d="M3.500 5.500.5 8.500" strokeWidth="1.500" /></Svg>
      </div>
      <Svg w={11} h={10} className="ml-[8px] text-[#666]"><path d="M5.500 0 11 5H9.500v4H6.800V6H4.200v3H1.500V5H0z" fill="currentColor" stroke="none" /></Svg>
      <Svg w={11} h={9} className="ml-[13px]"><path d="M0 1.500 4 3l2-1.500L9 3 8 6 5 6.500 2 7l1-3z" fill="#e2a526" stroke="none" /><path d="M7 2l3-1.500M3.500 6 2 8M6 5l1.500 2" stroke="#6d4e1b" strokeWidth=".8" /></Svg>
      <div className="ml-[5px] h-[15px] w-px bg-[#ddd]" />
      <Down className="ml-[4px] text-[#222]" />
      <Svg w={11} h={11} className="ml-[7px] text-[#333]"><path d="M.5.500h10v10H.5z" strokeDasharray="1 1" strokeWidth=".7" /><path d="M2 4 4 2c3 0 5 0 5 3v3.500H6.500V7H4z" fill="currentColor" stroke="none" /></Svg>
      <div className="ml-[8px] flex h-[11px] w-[11px] shrink-0 items-center justify-center rounded-[4px] bg-[#c41e1e] text-[5px] leading-none font-bold text-white">ABP</div>
      <Down className="ml-[2px] text-[#222]" />
      <div className="ml-[7px] h-[18px] w-px bg-[#ddd]" />
      <Svg w={11} h={9} className="ml-[8px] text-[#555]"><path d="M0 1h11M0 4.500h11M0 8h11" strokeWidth="1.500" /></Svg>
    </div>
  );
}

function Browser() {
  return (
    <div className="absolute top-[66px] left-[12px] flex h-[155px] w-[1267px] flex-col border-x border-b border-[#a98a42] bg-[#eec766]">
      <BrowserTabs />
      <div className="mr-[3px] ml-[3px] flex h-[121px] flex-col overflow-hidden border border-t-0 border-[#a88c4b] bg-white">
        <NavBar />
        <div className="flex min-h-0 flex-1">
          <div className="min-w-0 flex-1 overflow-hidden pt-[5px] pl-[5px] font-['Noto_Sans',sans-serif]">
            <div className="h-[67px] w-[273px] bg-[#c8c8c8] pt-[15px] pl-[13px] text-[15px] leading-[20px] font-bold text-black">
              <Fit w={191}>Вступив в бой с шипящими</Fit>
              <Fit w={53}>змеями</Fit>
            </div>
            <Fit w={508} className="pt-[11px] text-[10.500px] leading-[14px] text-[#222]">{phrase + '.'}</Fit>
          </div>
          <div className="flex w-[10px] shrink-0 flex-col items-center bg-[#f0f0f0] pt-[4px] pb-[4px] text-[#444]">
            <Svg w={5} h={4}><path d="m.5 3 2-2 2 2" strokeWidth="1.300" /></Svg>
            <div className="mt-[4px] h-[21px] w-full bg-[#c9c9c9]" />
            <Svg w={5} h={4} className="mt-auto"><path d="m.5 1 2 2 2-2" strokeWidth="1.300" /></Svg>
          </div>
        </div>
      </div>
    </div>
  );
}

export default function App() {
  return (
    <div className="relative h-[720px] w-[1280px] overflow-hidden bg-[#2f2f2f] font-['Open_Sans','Noto_Sans',sans-serif] leading-none">
      <MenuBar />
      <OptionsBar />
      <div className="flex h-[678px] overflow-hidden pl-[1px]">
        <Toolbar />
        <Document />
        <RightDock />
      </div>
      <div className="flex h-[2px] bg-[#5b543e]"><div className="ml-[117px] h-px w-[105px] self-end bg-[#c8c0ae]" /><div className="ml-[45px] h-px w-[105px] self-end bg-[#8c836a]" /></div>
      <div className="pointer-events-none absolute top-[23px] left-[491px] h-[30px] w-[28px] rounded-full border border-[#8c4a4a]/40" />
      <Browser />
      <Svg w={10} h={14} className="absolute top-[78px] left-[603px]"><path d="M.7.700v10.500l2.500-2.300 1.800 4 1.800-.8-1.800-3.800h3.500z" fill="white" stroke="#222" strokeWidth=".8" /></Svg>
    </div>
  );
}
